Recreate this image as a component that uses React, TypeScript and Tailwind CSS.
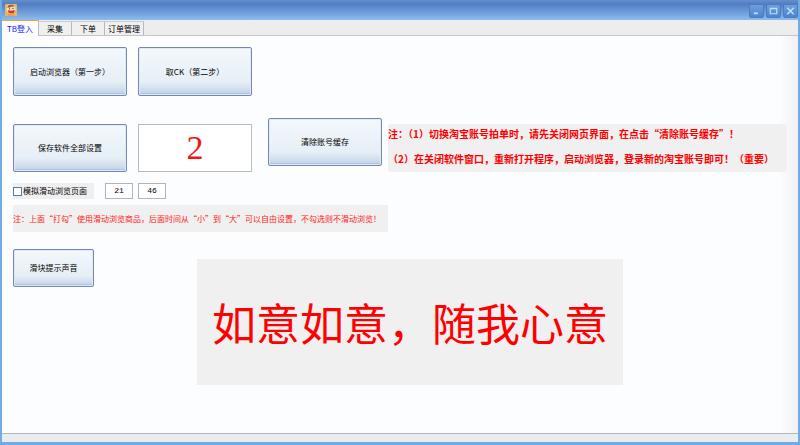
import React, { useState } from "react";
import clsx from "clsx";

const tabs = ["TB登入", "采集", "下单", "订单管理"];

interface XpButtonProps {
  children: React.ReactNode;
  className?: string;
}

function XpButton({ children, className }: XpButtonProps) {
  return (
    <button
      type="button"
      className={clsx(
        "shrink-0 rounded-xs border border-[#7487b8] bg-linear-to-b from-[#f3f8fc] from-0% via-[#e6eff6] via-72% to-[#c0d1e6] to-100% text-center text-black shadow-[inset_0_0_0_1px_#e0eaf6,inset_0_-2px_0_0_#b0c3dc]",
        className
      )}
    >
      {children}
    </button>
  );
}

function AppLogo() {
  return (
    <svg viewBox="0 0 12 12" className="size-3" aria-hidden="true">
      <rect width="12" height="12" rx="1" fill="#e5b568" />
      <path d="M1.5 5 2.5 2 5 1.6 7.5 1 10.3 2.8 10.6 6 8.8 8.6 3.5 8.8 1.8 7Z" fill="#f5dfc2" />
      <path d="M2.2 3.8 3.6 1.2 7.8.8 9.6 2.8 7.5 2.4 4.5 3.4Z" fill="#a8552f" />
      <path d="M2.8 6.2 6 6.8l3.8-.8L9 8.8 6.2 9.6 3.4 8.6Z" fill="#cf3a26" />
      <circle cx="4.6" cy="4.9" r=".6" fill="#50251c" />
      <circle cx="8" cy="4.4" r=".6" fill="#50251c" />
      <path d="M3.2 9.6h5.4l.8 2.4H2.8Z" fill="#eda23b" />
    </svg>
  );
}

const windowButtons = [
  { label: "最小化", icon: <path d="M4 9h4.5" strokeWidth="2" /> },
  { label: "最大化", icon: <path d="M3.5 3.5h7v6h-7ZM3.5 4h7" strokeWidth="1.3" /> },
  { label: "关闭", icon: <path d="m3.5 3 7 7m0-7-7 7" strokeWidth="1.7" /> },
];

function TitleBar() {
  return (
    <header className="flex h-5 items-center justify-between bg-linear-to-b from-[#668fcd] from-0% via-[#507dc2] via-20% to-[#8dbcee] to-100% pl-[3px]">
      <AppLogo />
      <div className="flex gap-0.5 pt-px">
        {windowButtons.map((b) => (
          <button
            key={b.label}
            type="button"
            aria-label={b.label}
            className="h-[14px] w-[15px] rounded-xs border border-[#4c7cbd] bg-linear-to-b from-[#6f9fdb] to-[#4b85cd]"
          >
            <svg viewBox="0 0 14 13" className="h-full w-full" fill="none" stroke="#c2dcf6">
              {b.icon}
            </svg>
          </button>
        ))}
      </div>
    </header>
  );
}

export default function App() {
  const [active, setActive] = useState(0);
  const [simulate, setSimulate] = useState(false);

  return (
    <div className="flex min-h-screen flex-col border-x-2 border-b-3 border-[#72aae3] bg-[#fcfdff] font-['Noto_Sans_CJK_SC',sans-serif] text-[8px] leading-3 text-black">
      <TitleBar />

      <nav className="flex h-4 items-end border-b border-[#c5c5c9] bg-[#ededee]">
        {tabs.map((tab, i) => (
          <button
            key={tab}
            type="button"
            onClick={() => setActive(i)}
            className={clsx(
              "border-r border-[#b5b9c0] whitespace-nowrap",
              i === 0 ? "w-[37px]" : i === 3 ? "w-[39px]" : "w-[33px]",
              i === active
                ? "-mb-px h-4 border-t border-t-[#f0a63c] bg-[#fcfdff] text-[#2222ff]"
                : "h-[14px] border-t border-t-[#c9ccd2] bg-[#f0f0f1]"
            )}
          >
            {tab}
          </button>
        ))}
      </nav>

      <main className="flex-1 bg-linear-to-l from-[#f0f1f3] to-[#fcfdff] to-[18px] pt-[11px] pr-[11px] pl-[11px]">
        <div className="flex gap-[11px]">
          <XpButton className="h-[49px] w-[114px]">启动浏览器（第一步）</XpButton>
          <XpButton className="h-[49px] w-[114px]">取CK（第二步）</XpButton>
        </div>

        <div className="mt-[22px] flex items-end">
          <XpButton className="h-12 w-[114px]">保存软件全部设置</XpButton>
          <input
            aria-label="数量"
            defaultValue="2"
            className="ml-[11px] h-12 w-[114px] shrink-0 border border-[#b9bbc2] bg-white text-center font-['Liberation_Serif','Noto_Sans_CJK_SC',serif] text-[34px] leading-10 text-[#f51414]"
          />
          <XpButton className="mb-[6px] ml-4 h-12 w-[114px]">清除账号缓存</XpButton>
          <div className="ml-[6px] flex h-12 min-w-0 flex-1 flex-col justify-between rounded-sm bg-[#f0f0f0] pt-0.5 pb-[5px] text-[10px] leading-4 font-bold whitespace-nowrap text-[#ff0000]">
            <p>注：（1）切换淘宝账号拍单时，请先关闭网页界面，在点击“清除账号缓存”！</p>
            <p>（2）在关闭软件窗口，重新打开程序，启动浏览器，登录新的淘宝账号即可！（重要）</p>
          </div>
        </div>

        <div className="mt-[11px] flex h-4 items-stretch">
          <label className="flex w-[81px] items-center gap-px bg-[#efeff0] whitespace-nowrap">
            <input
              type="checkbox"
              checked={simulate}
              onChange={(e) => setSimulate(e.target.checked)}
              className="size-[9px] shrink-0 appearance-none border border-[#587c9c] bg-white checked:bg-[#3f7fbf]"
            />
            模拟滑动浏览页面
          </label>
          <input
            aria-label="最小时间"
            defaultValue="21"
            className="ml-[11px] w-7 border border-[#b0b3bb] bg-white text-center font-['Liberation_Mono','Noto_Sans_CJK_SC',monospace]"
          />
          <input
            aria-label="最大时间"
            defaultValue="46"
            className="ml-[5px] w-7 border border-[#b0b3bb] bg-white text-center font-['Liberation_Mono','Noto_Sans_CJK_SC',monospace]"
          />
        </div>

        <p className="mt-[6px] flex h-[27px] w-[375px] items-center bg-[#f0f0f0] whitespace-nowrap text-[#ff1a1a]">
          注：上面“打勾”使用滑动浏览商品，后面时间从“小”到“大”可以自由设置，不勾选则不滑动浏览！
        </p>

        <div className="mt-[17px] flex items-start">
          <XpButton className="h-[38px] w-[81px]">滑块提示声音</XpButton>
          <div className="mt-[10px] ml-[103px] flex h-[126px] w-[426px] items-center justify-center bg-[#f0f0f0] text-[44px] leading-[48px] whitespace-nowrap text-[#ff0000]">
            如意如意，随我心意
          </div>
        </div>
      </main>

      <footer className="h-[9px] border-t border-[#b5b6b9] bg-[#ebecef]" />
    </div>
  );
}
